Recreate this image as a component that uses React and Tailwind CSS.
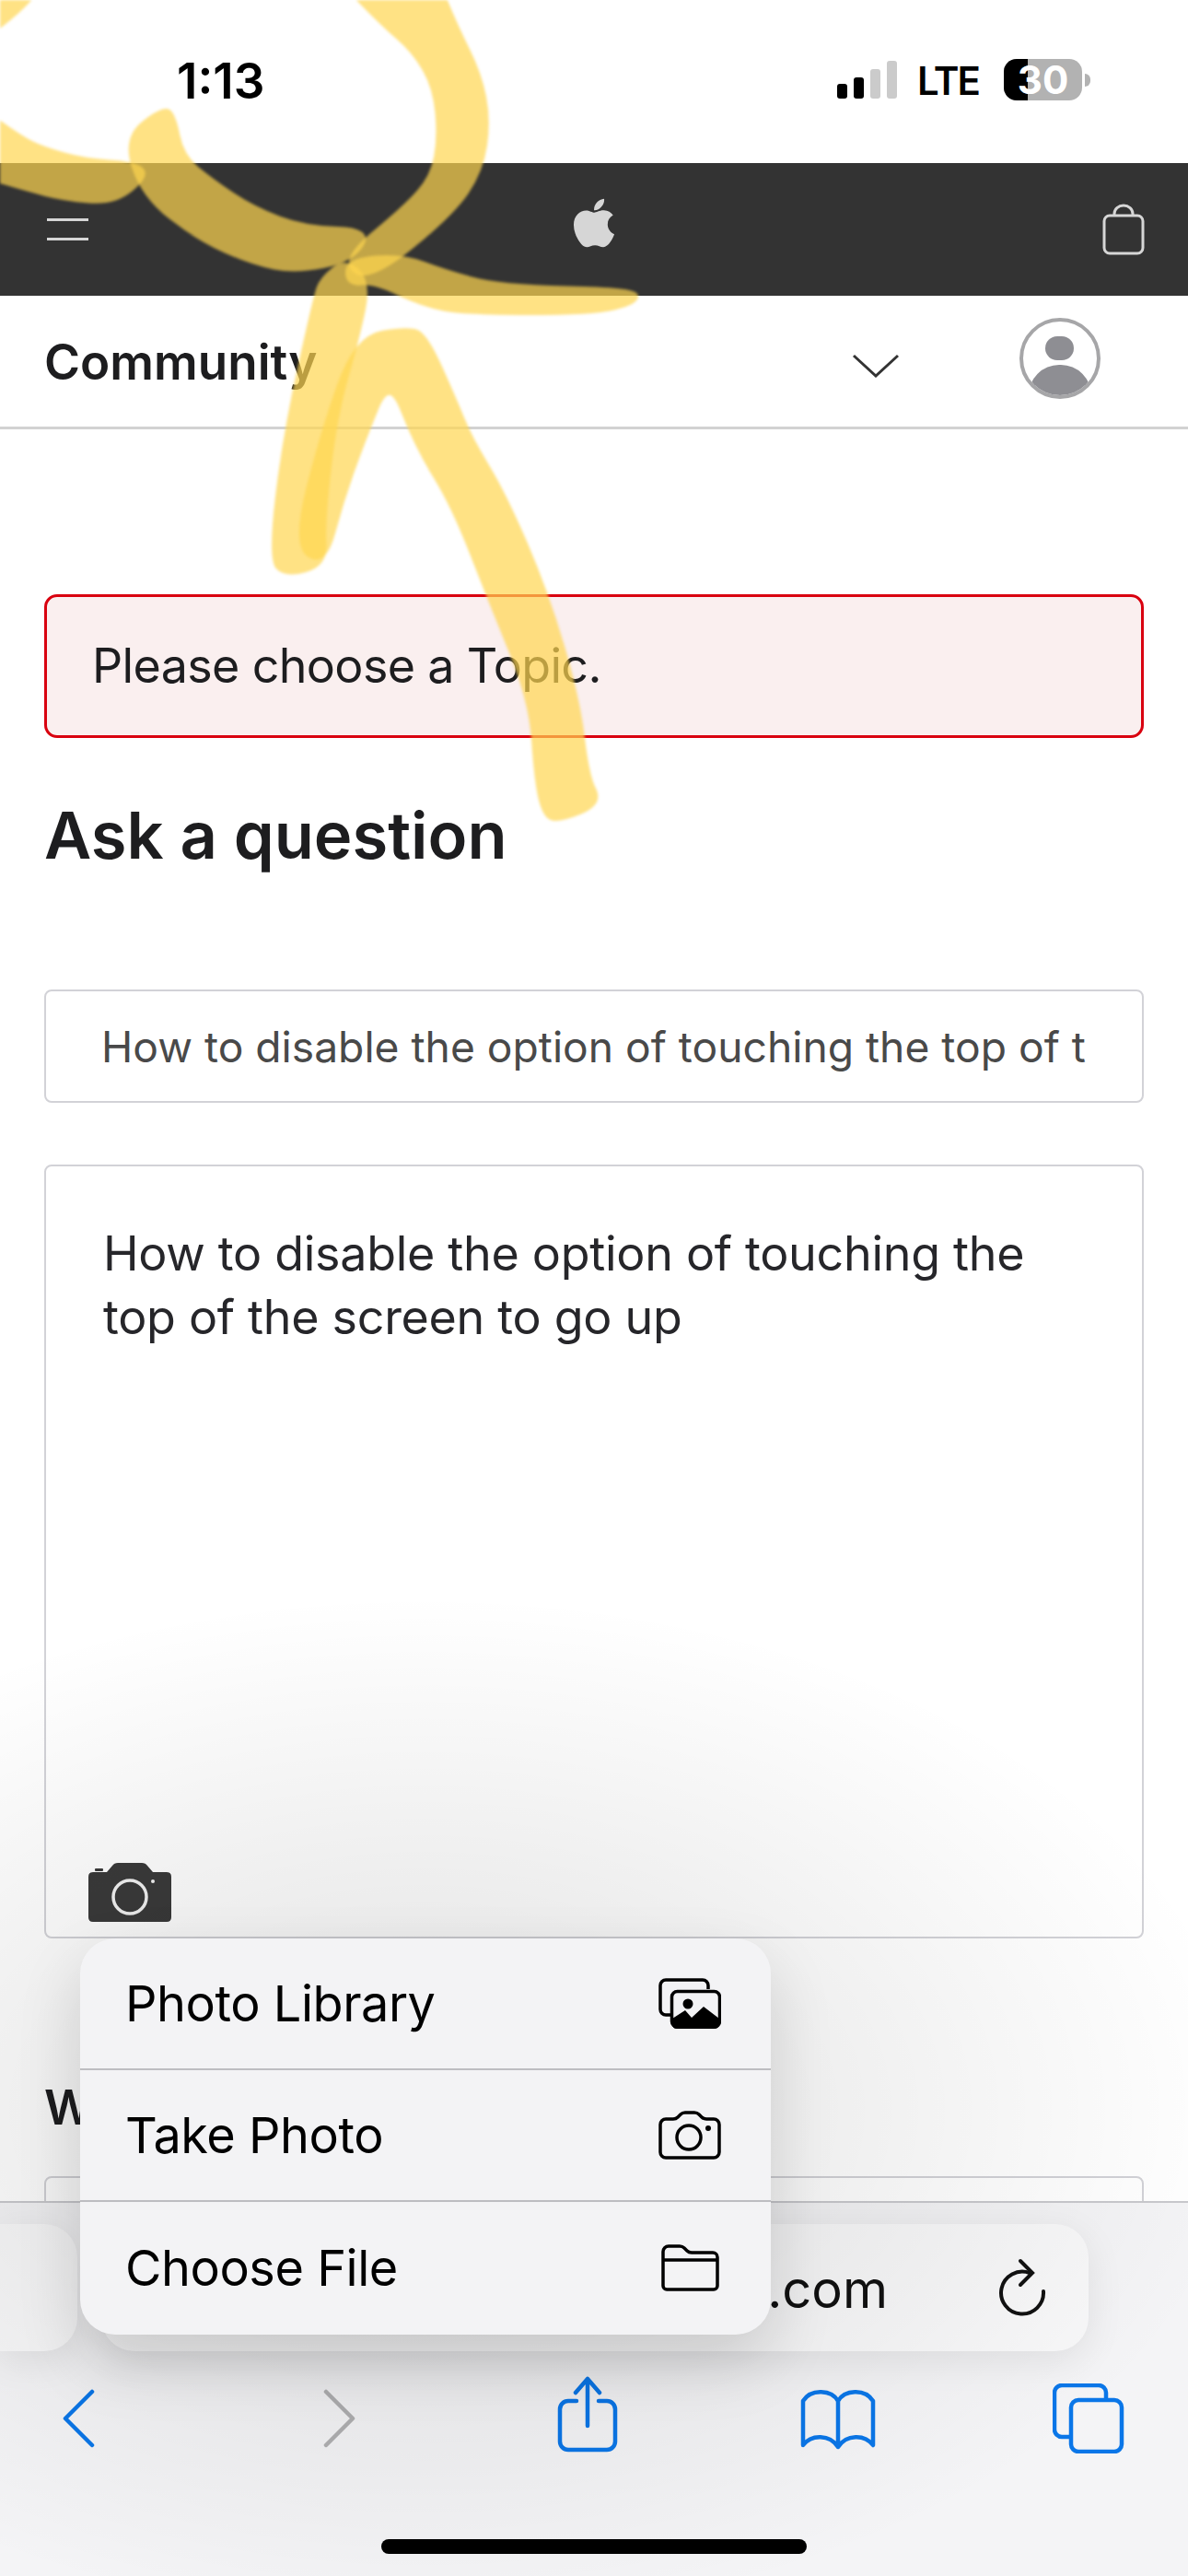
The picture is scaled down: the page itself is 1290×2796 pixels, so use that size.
import { FaApple } from 'react-icons/fa6';

// closed path through the midpoints, so the marker strokes get soft corners
const smooth = (pts) => {
	const mid = (a, b) => [(a[0] + b[0]) / 2, (a[1] + b[1]) / 2];
	const start = mid(pts[pts.length - 1], pts[0]);
	let d = `M${start[0]} ${start[1]}`;
	pts.forEach((p, i) => {
		const m = mid(p, pts[(i + 1) % pts.length]);
		d += ` Q${p[0]} ${p[1]} ${m[0]} ${m[1]}`;
	});
	return d + ' Z';
};

const strokes = [
	[[-20, -20], [48, -20], [20, 12], [-20, 42]],
	[[362, -30], [470, -30], [495, 30], [520, 80], [530, 130], [522, 185], [490, 232], [400, 305], [372, 282], [440, 226], [470, 192], [478, 150], [473, 95], [450, 55], [415, 25]],
	[[-20, 120], [22, 150], [46, 162], [92, 175], [145, 178], [160, 190], [124, 220], [69, 215], [30, 205], [-20, 190]],
	[[136, 150], [177, 118], [188, 125], [197, 170], [230, 197], [275, 227], [331, 248], [402, 250], [381, 282], [321, 294], [275, 285], [216, 259], [156, 212]],
	[[378, 283], [436, 278], [482, 295], [542, 312], [690, 315], [690, 328], [643, 339], [505, 339], [459, 330], [406, 305], [378, 308]],
	[[350, 303], [375, 283], [400, 306], [388, 365], [363, 453], [350, 568], [353, 612], [310, 624], [294, 606], [310, 472], [343, 323]],
	[[352, 612], [320, 592], [350, 472], [387, 367], [443, 357], [462, 365], [493, 434], [510, 476], [547, 537], [593, 644], [627, 759], [637, 843], [652, 872], [607, 890], [592, 885], [583, 847], [577, 759], [533, 652], [493, 549], [453, 484], [423, 407], [393, 480], [370, 545]],
];

const Scribble = () => (
	<svg className="absolute left-0 top-0 pointer-events-none blur-[1.5px]" width="1290" height="900" viewBox="0 0 1290 900">
		{strokes.map((s, i) => (
			<path key={i} d={smooth(s)} fill="#ffd650" stroke="#ffd650" strokeWidth="6" strokeLinejoin="round" opacity="0.7" />
		))}
	</svg>
);

const StatusBar = () => (
	<div className="h-[177px] bg-white relative flex items-start">
		<div className="ml-[192px] mt-[58px] text-[53px] leading-[60px] font-semibold text-black">1:13</div>
		<div className="ml-auto mr-[106px] mt-[64px] flex items-start">
			<div className="flex items-end gap-[7px] h-[43px] mr-[22px]">
				<div className="w-[11px] h-[16px] rounded-[3px] bg-black" />
				<div className="w-[11px] h-[23px] rounded-[3px] bg-black" />
				<div className="w-[11px] h-[32px] rounded-[3px] bg-[#cbcbcb]" />
				<div className="w-[11px] h-[41px] rounded-[3px] bg-[#cbcbcb]" />
			</div>
			<div className="text-[42px] leading-[44px] font-semibold text-black mr-[27px] mt-[2px] tracking-[-2px]">LTE</div>
			<div className="relative w-[85px] h-[45px] rounded-[14px] bg-[#b2b2b2] flex items-center justify-center">
				<div className="absolute left-0 top-0 bottom-0 w-[26px] rounded-l-[14px] bg-black" />
				<span className="relative text-[42px] leading-[45px] font-bold text-white">30</span>
			</div>
			<div className="w-[6px] h-[14px] mt-[16px] ml-[3px] rounded-r-full bg-[#b2b2b2]" />
		</div>
	</div>
);

const NavBar = () => (
	<div className="h-[144px] bg-[#333333] flex items-center relative">
		<div className="ml-[51px] flex flex-col gap-[18px] w-[45px]">
			<div className="h-[3px] bg-[#d6d6d6]" />
			<div className="h-[3px] bg-[#d6d6d6]" />
		</div>
		<div className="ml-[519px] mt-[-14px] text-[#d6d6d6]">
			<FaApple size={60} />
		</div>
		<svg className="ml-auto mr-[47px]" width="46" height="56" viewBox="0 0 46 56" fill="none" stroke="#d6d6d6" strokeWidth="3">
			<rect x="2" y="13" width="42" height="41" rx="6" />
			<path d="M13 13 V11 a10 9 0 0 1 20 0 V13" />
		</svg>
	</div>
);

const CommunityBar = () => (
	<div className="h-[145px] bg-white border-b-[3px] border-[#d2d2d2] flex items-center relative">
		<div className="ml-[48px] mt-[2px] text-[53px] leading-[60px] font-semibold text-[#1d1d1f]">Community</div>
		<svg className="ml-[580px] mt-[10px]" width="52" height="26" viewBox="0 0 52 26" fill="none" stroke="#333" strokeWidth="3">
			<path d="M2 2 L26 24 L50 2" />
		</svg>
		<div className="ml-[130px] mt-[-6px] w-[88px] h-[88px] rounded-full border-[4px] border-[#a6a6a8] bg-white overflow-hidden relative flex flex-col items-center">
			<div className="w-[31px] h-[40px] mt-[16px] rounded-full bg-[#8e8e93]" />
			<div className="w-[68px] h-[50px] mt-[5px] rounded-t-full bg-[#8e8e93]" />
		</div>
	</div>
);

const CameraFilled = () => (
	<svg width="90" height="64" viewBox="0 0 90 64">
		<path d="M5 10 H20 L26 3 Q28 0 32 0 H58 Q62 0 64 3 L70 10 H85 Q90 10 90 15 V59 Q90 64 85 64 H5 Q0 64 0 59 V15 Q0 10 5 10 Z" fill="#3a3a3a" />
		<rect x="7" y="6" width="9" height="3" rx="1" fill="#3a3a3a" />
		<ellipse cx="45" cy="37" rx="18" ry="18" fill="none" stroke="#f2f2f2" strokeWidth="3.5" />
		<circle cx="70" cy="20" r="2" fill="#f2f2f2" />
	</svg>
);

const PhotoLibraryIcon = () => (
	<svg width="68" height="55" viewBox="0 0 68 55" fill="none" stroke="#000" strokeWidth="3.5">
		<path d="M54 12 V8 a6 6 0 0 0 -6 -6 H8 a6 6 0 0 0 -6 6 V34 a6 6 0 0 0 6 6 H13" />
		<rect x="14.5" y="14.5" width="52" height="38.5" rx="6" />
		<circle cx="32" cy="28" r="5.5" fill="#000" stroke="none" />
		<path d="M15 44 L29 35 L36 43 L49 31 L66 44 V50 Q66 55 60 55 H20 Q15 55 15 50 Z" fill="#000" stroke="none" />
	</svg>
);

const TakePhotoIcon = () => (
	<svg width="68" height="53" viewBox="0 0 68 53" fill="none" stroke="#000" strokeWidth="3.5">
		<path d="M8 9 h8 q3 0 5 -2 l3 -3 q2 -2 5 -2 h10 q3 0 5 2 l3 3 q2 2 5 2 h8 a6 6 0 0 1 6 6 v30 a6 6 0 0 1 -6 6 H8 a6 6 0 0 1 -6 -6 V15 a6 6 0 0 1 6 -6 z" />
		<circle cx="33" cy="29" r="13" />
		<circle cx="54" cy="19" r="3" fill="#000" stroke="none" />
	</svg>
);

const FolderIcon = () => (
	<svg width="63" height="51" viewBox="0 0 63 51" fill="none" stroke="#000" strokeWidth="3.5">
		<path d="M2 45 V8 a6 6 0 0 1 6 -6 h12 q3 0 5 2 l3 3 q2 2 5 2 h23 a5 5 0 0 1 5 5 v31 a4 4 0 0 1 -4 4 H6 a4 4 0 0 1 -4 -4 z" />
		<path d="M2 17 H61" />
	</svg>
);

const MenuRow = ({ label, icon, last }) => (
	<div className={`h-[143px] flex items-center pl-[49px] ${last ? '' : 'border-b-2 border-[#bdbdc1]'}`}>
		<span className="text-[54px] leading-[64px] text-black tracking-[-0.45px]">{label}</span>
		<div className="ml-auto w-[68px] mr-[54px] flex justify-center">{icon}</div>
	</div>
);

const Toolbar = () => (
	<div className="absolute left-0 right-0 bottom-0 h-[407px] bg-[#f4f4f6] border-t-2 border-[#c9c9cd]">
		<div className="mt-[23px] h-[138px] flex">
			<div className="w-[84px] h-full bg-[#f8f8f9] rounded-r-[36px] shadow-[0_10px_40px_rgba(0,0,0,0.08)]" />
			<div className="ml-[26px] w-[1072px] h-full bg-[#f8f8f9] rounded-[36px] shadow-[0_10px_40px_rgba(0,0,0,0.08)] flex items-center justify-end pr-[44px]">
				<span className="text-[56px] leading-[64px] text-[#111] mr-[120px] mt-[4px]">.com</span>
				<svg className="mt-[2px]" width="54" height="66" viewBox="0 0 54 66" fill="none" stroke="#111" strokeWidth="4" strokeLinecap="round">
					<path d="M34 16 A23 23 0 1 0 49 36" />
					<path d="M24 3 L37 16 L24 29" />
				</svg>
			</div>
		</div>
		<div className="mt-[31px] h-[84px] flex items-center pl-[68px]">
			<svg width="36" height="64" viewBox="0 0 36 64" fill="none" stroke="#0a76e8" strokeWidth="4.5" strokeLinecap="round" strokeLinejoin="round">
				<path d="M32 3 L3 32 L32 61" />
			</svg>
			<svg className="ml-[246px]" width="36" height="64" viewBox="0 0 36 64" fill="none" stroke="#b0b0b2" strokeWidth="4.5" strokeLinecap="round" strokeLinejoin="round">
				<path d="M4 3 L33 32 L4 61" />
			</svg>
			<svg className="ml-[219px] mt-[-9px]" width="66" height="84" viewBox="0 0 66 84" fill="none" stroke="#0a76e8" strokeWidth="4.5" strokeLinecap="round" strokeLinejoin="round">
				<path d="M21 27 H12 a9 9 0 0 0 -9 9 V71 a9 9 0 0 0 9 9 H54 a9 9 0 0 0 9 -9 V36 a9 9 0 0 0 -9 -9 H45" />
				<path d="M33 54 V3 M20 18 L33 3 L46 18" />
			</svg>
			<svg className="ml-[198px]" width="82" height="68" viewBox="0 0 82 68" fill="none" stroke="#0a76e8" strokeWidth="4.5" strokeLinejoin="round" strokeLinecap="round">
				<path d="M41 15 C34 3 12 1 3 15 V63 C12 51 32 51 41 65 C50 51 70 51 79 63 V15 C70 1 48 3 41 15 V65" />
			</svg>
			<svg className="ml-[192px]" width="78" height="76" viewBox="0 0 78 76" fill="none" stroke="#0a76e8" strokeWidth="4.5">
				<path d="M58 18 V10 a8 8 0 0 0 -8 -8 H10 a8 8 0 0 0 -8 8 V50 a8 8 0 0 0 8 8 H20" />
				<rect x="20" y="18" width="55" height="56" rx="8" />
			</svg>
		</div>
		<div className="absolute left-[414px] bottom-[24px] w-[462px] h-[16px] rounded-full bg-black" />
	</div>
);

const App = () => {
	return (
		<div className="relative w-[1290px] h-[2796px] overflow-hidden bg-white [font-family:Inter,sans-serif]">
			<StatusBar />
			<NavBar />
			<CommunityBar />

			<div className="px-[48px]">
				<div className="mt-[179px] h-[156px] rounded-[14px] border-[3px] border-[#d9000f] bg-[#faefef] flex items-center pl-[49px]">
					<span className="text-[52px] leading-[60px] text-[#1d1d1f] tracking-[-0.65px]">Please choose a Topic.</span>
				</div>
				<h1 className="mt-[64px] text-[70.5px] leading-[84px] font-semibold text-[#1d1d1f]">Ask a question</h1>
				<div className="mt-[125px] h-[123px] rounded-[8px] border-2 border-[#d2d2d7] bg-white flex items-center pl-[60px] pr-[50px] overflow-hidden">
					<span className="text-[46.2px] leading-[60px] text-[#494949] whitespace-nowrap">How to disable the option of touching the top of t</span>
				</div>
				<div className="mt-[67px] h-[840px] rounded-[8px] border-2 border-[#d2d2d7] bg-white flex flex-col pl-[62px] pt-[60px] pb-[16px]">
					<div className="w-[1040px] text-[52px] leading-[69px] tracking-[-0.3px] text-[#26262a]">How to disable the option of touching the top of the screen to go up</div>
					<div className="mt-auto -ml-[16px]">
						<CameraFilled />
					</div>
				</div>
				<div className="mt-[154px] text-[52px] leading-[60px] font-semibold text-[#1d1d1f]">W</div>
				<div className="mt-[44px] h-[100px] rounded-[8px] border-2 border-[#d2d2d7] bg-white" />
			</div>

			<Toolbar />

			{/* haze the open menu throws over the page */}
			<div className="absolute inset-0 pointer-events-none bg-[radial-gradient(ellipse_900px_560px_at_460px_2290px,rgba(0,0,0,0.12),rgba(0,0,0,0))]" />

			<div className="absolute left-[87px] top-[2104px] w-[750px] h-[430px] rounded-[38px] bg-[#f3f3f5] shadow-[0_30px_70px_rgba(0,0,0,0.14)]">
				<MenuRow label="Photo Library" icon={<PhotoLibraryIcon />} />
				<MenuRow label="Take Photo" icon={<TakePhotoIcon />} />
				<MenuRow label="Choose File" icon={<FolderIcon />} last />
			</div>

			<Scribble />
		</div>
	);
};

export default App;
